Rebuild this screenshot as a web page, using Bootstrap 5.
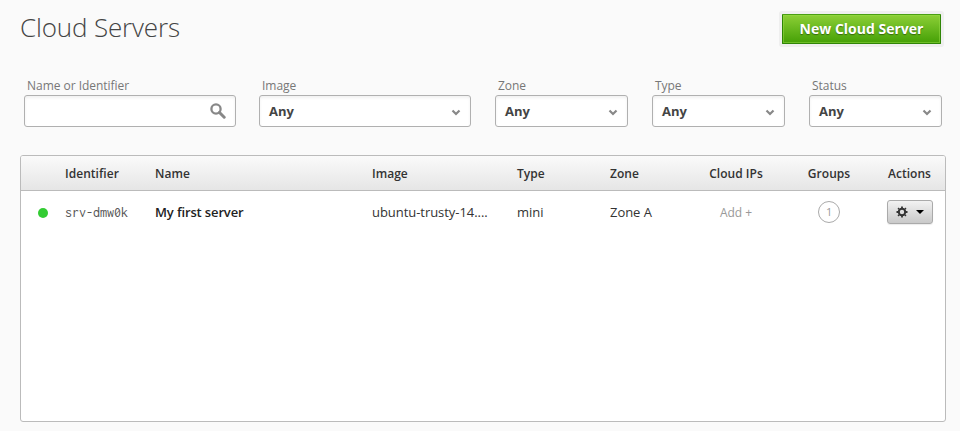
<!DOCTYPE html>
<html lang="en">
<head>
<meta charset="utf-8">
<meta name="viewport" content="width=device-width, initial-scale=1">
<title>Cloud Servers</title>
<link href="https://cdn.jsdelivr.net/npm/bootstrap@5.3.0/dist/css/bootstrap.min.css" rel="stylesheet">
<style>
body{background:#fafafa;font-family:"Open Sans","Noto Sans",sans-serif;font-size:13px;line-height:18px;color:#333;height:431px;overflow:hidden}
.page-head{height:78px;padding:10px 19px 0 20px}
.page-title{font-size:26px;font-weight:300;line-height:34px;color:#444;letter-spacing:-.15px}
.btn-create{width:159px;height:30px;margin-top:4px;padding:0;border:1px solid #2f8506;border-top-color:#4a9f12;border-radius:1px;background:linear-gradient(#8ccf36,#45a006);box-shadow:0 0 0 3px #efefef,inset 0 0 0 1px rgba(150,220,70,.5);color:#fff!important;font-size:14px;font-weight:700;line-height:28px;text-shadow:0 1px 1px rgba(0,0,0,.4)}
.filters{padding:0 18px 0 24px;gap:24px}
.filter-label{font-size:12px;line-height:16px;color:#777;padding-left:3px;margin-bottom:1px;letter-spacing:-.03px}
.field{height:32px;border:1px solid #b0b0b0;border-radius:3px;background:#fff;box-shadow:inset 0 2px 3px rgba(0,0,0,.06);font-weight:700;color:#444;padding:0 9px}
.field svg{margin-top:1px}
.w-wide{width:212px}.w-slim{width:133px}
.w-search{width:212px;margin-right:-1px}
.w-search svg{margin-top:0}
.servers{margin:28px 14px 0 20px;height:267px;border:1px solid #bbb;border-radius:3px;background:#fff;overflow:hidden}
.server-table{table-layout:fixed;width:924px;margin:0;border-collapse:separate;border-spacing:0}
.server-table th,.server-table td{padding:0;vertical-align:middle;white-space:nowrap}
.server-table th{height:35px;padding-top:2px;border-bottom:1px solid #bbb;font-size:12px;line-height:18px;font-weight:600;color:#333;letter-spacing:.03px}
.server-table thead{background:linear-gradient(#fafafa,#e5e5e5)}
.server-table td{height:42px;letter-spacing:-.05px}
.status-dot{width:10px;height:10px;background:#3c3;margin:2px 0 0 17px}
.server-table .ident{font:14px/18px Inconsolata,"Liberation Mono",monospace;color:#555;letter-spacing:0;padding-top:2px}
.server-table .server-name{font-weight:600;color:#222;letter-spacing:-.14px}
.server-table .add-ip{font-size:12px;color:#999;padding-top:1px;letter-spacing:0}
.group-count{width:22px;height:22px;border:1px solid #aaa;font-size:11px;color:#999}
.btn-gear{width:46px;height:24px;padding:0 0 1px;border:1px solid #aaa;border-radius:3px;background:linear-gradient(#f2f2f2,#c9c9c9);box-shadow:0 1px 1px rgba(0,0,0,.08)}
.server-table .actions-cell{padding-right:2px}
.server-table td.actions-cell{padding-right:1px}
.caret-icon{margin-top:1px}
</style>
<script src="https://cdn.jsdelivr.net/npm/bootstrap@5.3.0/dist/js/bootstrap.bundle.min.js"></script>
</head>
<body>
<header class="page-head d-flex justify-content-between align-items-start">
  <h1 class="page-title m-0">Cloud Servers</h1>
  <button class="btn btn-create" type="button">New Cloud Server</button>
</header>
<main>
  <section class="filters d-flex">
    <div class="w-search flex-shrink-0"><div class="filter-label">Name or Identifier</div>
      <div class="field d-flex align-items-center justify-content-end"><svg width="16" height="16" viewBox="0 0 16 16" fill="none" stroke="#888"><circle cx="6" cy="6" r="4.600" stroke-width="2.300"/><path d="M9.500 9.500l4.700 4.700" stroke-width="3" stroke-linecap="round"/></svg></div></div>
    <div class="w-wide flex-shrink-0"><div class="filter-label">Image</div>
      <div class="field d-flex align-items-center justify-content-between">Any<svg width="10" height="8" viewBox="0 0 10 8" fill="none" stroke="#888" stroke-width="2.2"><path d="M1.500 2.500L5 6l3.500-3.500"/></svg></div></div>
    <div class="w-slim flex-shrink-0"><div class="filter-label">Zone</div>
      <div class="field d-flex align-items-center justify-content-between">Any<svg width="10" height="8" viewBox="0 0 10 8" fill="none" stroke="#888" stroke-width="2.2"><path d="M1.500 2.500L5 6l3.500-3.500"/></svg></div></div>
    <div class="w-slim flex-shrink-0"><div class="filter-label">Type</div>
      <div class="field d-flex align-items-center justify-content-between">Any<svg width="10" height="8" viewBox="0 0 10 8" fill="none" stroke="#888" stroke-width="2.2"><path d="M1.500 2.500L5 6l3.500-3.500"/></svg></div></div>
    <div class="w-slim flex-shrink-0"><div class="filter-label">Status</div>
      <div class="field d-flex align-items-center justify-content-between">Any<svg width="10" height="8" viewBox="0 0 10 8" fill="none" stroke="#888" stroke-width="2.2"><path d="M1.500 2.500L5 6l3.500-3.500"/></svg></div></div>
  </section>
  <section class="servers">
    <table class="server-table">
      <colgroup><col width="44"><col width="90"><col width="217"><col width="145"><col width="93"><col width="80"><col width="92"><col width="94"><col width="69"></colgroup>
      <thead><tr><th></th><th>Identifier</th><th>Name</th><th>Image</th><th>Type</th><th>Zone</th><th class="text-center">Cloud IPs</th><th class="text-center">Groups</th><th class="text-center actions-cell">Actions</th></tr></thead>
      <tbody><tr>
        <td><div class="status-dot rounded-circle"></div></td>
        <td class="ident">srv-dmw0k</td>
        <td class="server-name">My first server</td>
        <td>ubuntu-trusty-14....</td>
        <td>mini</td>
        <td>Zone A</td>
        <td class="text-center add-ip">Add +</td>
        <td><div class="group-count rounded-circle d-flex align-items-center justify-content-center mx-auto">1</div></td>
        <td class="actions-cell"><button class="btn btn-gear d-flex align-items-center justify-content-center gap-2 mx-auto" type="button" aria-label="Actions"><svg width="12" height="12" viewBox="0 0 12 12" fill="none" stroke="#333"><circle cx="6" cy="6" r="3.200" stroke-width="2"/><path d="M6 .5V2M6 10v1.500M.5 6H2M10 6h1.500M2.100 2.100l1 1M8.900 8.900l1 1M2.100 9.900l1-1M8.900 3.100l1-1" stroke-width="1.800"/></svg><svg class="caret-icon" width="8" height="4" viewBox="0 0 8 4"><path d="M0 0h8L4 4z" fill="#000"/></svg></button></td>
      </tr></tbody>
    </table>
  </section>
</main>
</body>
</html>
